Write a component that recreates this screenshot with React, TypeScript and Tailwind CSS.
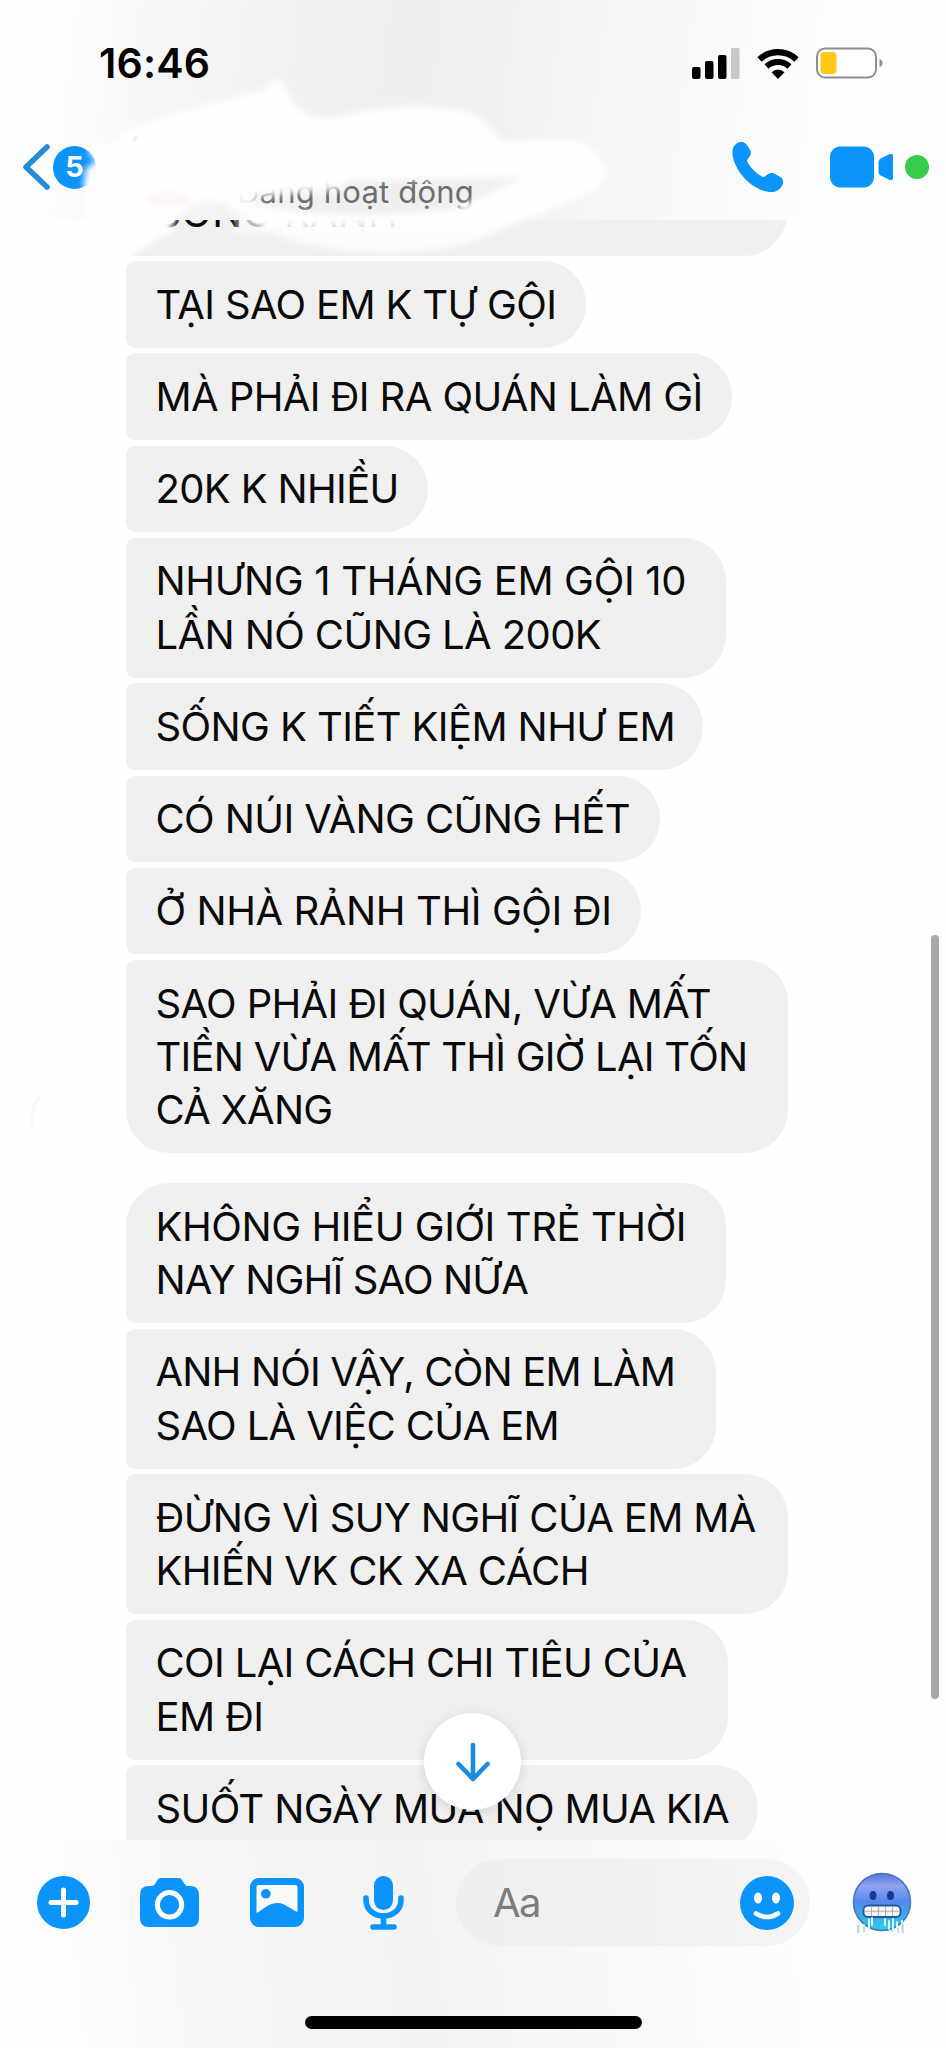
/**
 * Messenger chat screen: status bar, chat header, message list, composer.
 */
interface Message {
  lines: string[]
  width: string
  tracking?: string[]
  corners?: string
}

const MIDDLE = 'rounded-l-[9px] rounded-r-[43px]'

const groups: Message[][] = [
  [
    { lines: ['SỐNG RẢNH'], width: 'w-[661px]', tracking: ['tracking-[0.2px]'] },
    { lines: ['TẠI SAO EM K TỰ GỘI'], width: 'w-[460px]' },
    { lines: ['MÀ PHẢI ĐI RA QUÁN LÀM GÌ'], width: 'w-[606px]', tracking: ['tracking-[-0.6px]'] },
    { lines: ['20K K NHIỀU'], width: 'w-[302px]' },
    {
      lines: ['NHƯNG 1 THÁNG EM GỘI 10', 'LẦN NÓ CŨNG LÀ 200K'],
      width: 'w-[600px]',
      tracking: ['tracking-[-0.32px]', 'tracking-[-0.6px]'],
    },
    { lines: ['SỐNG K TIẾT KIỆM NHƯ EM'], width: 'w-[577px]', tracking: ['tracking-[-0.6px]'] },
    { lines: ['CÓ NÚI VÀNG CŨNG HẾT'], width: 'w-[534px]', tracking: ['tracking-[-0.6px]'] },
    { lines: ['Ở NHÀ RẢNH THÌ GỘI ĐI'], width: 'w-[515px]', tracking: ['tracking-[-0.4px]'] },
    {
      lines: ['SAO PHẢI ĐI QUÁN, VỪA MẤT', 'TIỀN VỪA MẤT THÌ GIỜ LẠI TỐN', 'CẢ XĂNG'],
      width: 'w-[662px]',
      tracking: ['tracking-[-0.65px]', 'tracking-[-0.75px]', 'tracking-[-0.75px]'],
      corners: 'rounded-tl-[9px] rounded-r-[43px] rounded-bl-[43px]',
    },
  ],
  [
    {
      lines: ['KHÔNG HIỂU GIỚI TRẺ THỜI', 'NAY NGHĨ SAO NỮA'],
      width: 'w-[600px]',
      tracking: ['tracking-[-0.42px]', 'tracking-[-0.85px]'],
      corners: 'rounded-tl-[43px] rounded-r-[43px] rounded-bl-[9px]',
    },
    {
      lines: ['ANH NÓI VẬY, CÒN EM LÀM', 'SAO LÀ VIỆC CỦA EM'],
      width: 'w-[590px]',
      tracking: ['tracking-[-0.82px]', 'tracking-[-0.65px]'],
    },
    { lines: ['ĐỪNG VÌ SUY NGHĨ CỦA EM MÀ', 'KHIẾN VK CK XA CÁCH'], width: 'w-[662px]' },
    { lines: ['COI LẠI CÁCH CHI TIÊU CỦA', 'EM ĐI'], width: 'w-[602px]' },
    { lines: ['SUỐT NGÀY MUA NỌ MUA KIA'], width: 'w-[632px]' },
  ],
]

function Bubble({ lines, width, tracking = [], corners = MIDDLE }: Message) {
  return (
    <div
      className={`${width} ${corners} bg-[#f0f0f0] py-[16.6px] pl-[29.5px] text-[40px] leading-[53.4px] whitespace-nowrap text-[#0a0a0a]`}
    >
      {lines.map((line, i) => (
        <p key={line} className={tracking[i] ?? 'tracking-[-0.65px]'}>
          {line}
        </p>
      ))}
    </div>
  )
}

function StatusBar() {
  return (
    <div className="flex h-[50px] items-center justify-between pr-[63px] pl-[99px]">
      <span className="text-[41px] leading-[50px] font-semibold tracking-[0.2px] text-black">16:46</span>
      <div className="flex items-center">
        <svg className="h-[31px] w-[48px]" viewBox="0 0 48 31">
          <rect x="0" y="19" width="8.5" height="12" rx="2" />
          <rect x="13" y="13" width="8.5" height="18" rx="2" />
          <rect x="26" y="7" width="8.5" height="24" rx="2" />
          <rect x="39" y="0" width="8.5" height="31" rx="1" fill="#c8c8c8" />
        </svg>
        <svg className="ml-[17px] h-[31px] w-[42px]" viewBox="0 0 42 31" fill="none" stroke="#000">
          <path d="M2.5 11.5A27 27 0 0 1 39.500 11.500" strokeWidth="6.200" />
          <path d="M9.500 18.500A17 17 0 0 1 32.500 18.500" strokeWidth="5.800" />
          <path d="M14.500 24.300Q21 18.500 27.500 24.300L21 31Z" fill="#000" stroke="none" />
        </svg>
        <svg className="ml-[17px] h-[32px] w-[67px]" viewBox="0 0 67 32">
          <rect x="1" y="1.500" width="59" height="29" rx="8" fill="#fff" stroke="#8e8e8e" strokeWidth="2" />
          <rect x="4.500" y="5" width="16" height="22" rx="4" fill="#fbc916" />
          <path d="M63.500 12Q66.500 13 66.500 16T63.500 20Z" fill="#8e8e8e" />
        </svg>
      </div>
    </div>
  )
}

function Header() {
  return (
    <header className="relative h-[220px] shrink-0 bg-[linear-gradient(97deg,#fefefe_6%,#f8f8f8_15%,#f2f2f2_28%,#efefef_43%,#f1f1f1_52%,#f7f7f7_67%,#fafafa_77%,#fefefe_88%)] pt-[38px]">
      <StatusBar />
      <div className="mt-[49px] flex h-[60px] items-center pr-[17px] pl-[23px]">
        <svg className="h-[46px] w-[27px]" viewBox="0 0 27 46" fill="none" stroke="#258bd6" strokeWidth="5.500" strokeLinecap="round" strokeLinejoin="round">
          <path d="M24 3L3 23L24 43" />
        </svg>
        <span className="ml-[3px] flex size-[43px] items-center justify-center rounded-full bg-[#0a94fc] text-[29px] font-bold text-white">
          5
        </span>
        <span className="mt-[50px] ml-[141px] text-[31px] leading-[40px] tracking-[0.2px] whitespace-nowrap text-[#6e6e6e]">
          Đang hoạt động
        </span>
        <div className="ml-auto flex items-center">
          <svg className="h-[52px] w-[52px]" viewBox="0 0 53 52" fill="#0a94fc">
            <path d="M9 0.500C12 0.300 14 2 16 4.500L18.500 9C20 12 19 14 17 16.500C15 19 15 20 16.500 22.500C20 28 24 32 30 35.500C32 36.500 33 36.500 35 34.500C38 32 40 31.500 43 32.500L49 36C52 38 53 41 51.500 44C49 49 45 51.500 40 51.500C31 51.500 20 46 11 35.500C4 27 0.500 18 0.500 11C0.500 5 4 1 9 0.500Z" />
          </svg>
          <svg className="ml-[46px] h-[42px] w-[64px]" viewBox="0 0 64 42" fill="#0a94fc">
            <rect x="0" y="0.500" width="44" height="41" rx="10" />
            <path d="M48.500 16Q48.500 14 50.500 12.500L60 8Q63 7 63 10V32Q63 35 60 34L50.500 29.500Q48.500 28 48.500 26Z" />
          </svg>
          <span className="ml-[11px] size-[24px] rounded-full bg-[#36cb4a]" />
        </div>
      </div>
    </header>
  )
}

// Кисть, которой закрашены имя и аватар собеседника
function BrushCover() {
  return (
    <svg className="pointer-events-none absolute top-0 left-0 h-[265px] w-[660px]" viewBox="0 0 660 265">
      <defs>
        <filter id="soft" x="-5%" y="-5%" width="110%" height="110%">
          <feGaussianBlur stdDeviation="3" />
        </filter>
      </defs>
      <g filter="url(#soft)" fill="#fefefe">
        <path
          fillRule="evenodd"
          d="M101 156C114 132 145 124 172 114L195 108C225 102 245 92 264 90Q277 66 289 93C293 112 315 120 335 117C390 104 430 104 470 112C488 120 492 134 502 140L575 140C595 145 605 165 606 178C600 188 590 195 570 200C548 212 530 217 512 224L262 224C254 214 240 210 228 205C215 200 200 200 190 206C180 212 176 216 173 226C160 240 145 248 128 256H85V170ZM228 197C280 194 320 184 350 181L525 177C500 188 480 197 460 207C430 214 350 217 310 213C280 209 250 206 228 197Z"
        />
        <path d="M240 215H530C500 232 470 246 440 249C380 256 320 250 285 238C262 230 252 222 240 215Z" opacity="0.860" />
        <ellipse cx="95" cy="150" rx="6" ry="8" />
        <ellipse cx="91" cy="184" rx="8" ry="7" />
        <path d="M150 208H172V236H150Z" opacity="0.700" />
        <path d="M236 214H270V234H236Z" opacity="0.600" />
        <path d="M230 176H345V190L300 193L256 197V212H232Z" opacity="0.850" />
        <ellipse cx="168" cy="199" rx="22" ry="8" fill="#fdf6f6" />
      </g>
      <path d="M133 141L137 137" stroke="#eee" strokeWidth="3" />
    </svg>
  )
}

function FrozenFace() {
  return (
    <svg className="h-[62px] w-[60px]" viewBox="0 0 60 62">
      <defs>
        <linearGradient id="ice" x1="0" y1="0" x2="0" y2="1">
          <stop offset="0" stopColor="#5672d8" />
          <stop offset="0.220" stopColor="#8fa4f4" />
          <stop offset="0.500" stopColor="#5388ee" />
          <stop offset="0.800" stopColor="#37b5e9" />
          <stop offset="1" stopColor="#2fd0e8" />
        </linearGradient>
      </defs>
      <circle cx="30" cy="30" r="28.500" fill="url(#ice)" stroke="#4275bd" strokeWidth="1.500" />
      <ellipse cx="21" cy="23.500" rx="3.500" ry="4.500" fill="#173c8d" />
      <ellipse cx="38.500" cy="23.500" rx="3.500" ry="4.500" fill="#173c8d" />
      <rect x="11.500" y="33.500" width="37" height="11.500" rx="4.500" fill="#f5f5f8" stroke="#24579c" strokeWidth="1.800" />
      <path d="M13 39.200H47M19.500 35V44M26.500 35V44M33.500 35V44M40.500 35V44" stroke="#a9a3ab" strokeWidth="0.900" />
      <path d="M7 50V60M12 53V58M17 47V57M20 46V53M33 47V53M37 49V57M41 47V58M45 50V57M50 49V60" fill="none" stroke="#d6f5fb" strokeWidth="2" strokeLinecap="round" />
      <path d="M6 53V61M12 55V60M40 57V60M46 56V61M51 53V61" stroke="#9cb7bd" strokeWidth="1" />
    </svg>
  )
}

function Composer() {
  return (
    <footer className="relative h-[208px] shrink-0 bg-[linear-gradient(83deg,#fefefe_6%,#f9f9f9_17%,#f4f4f4_32%,#f3f3f3_45%,#f8f8f8_62%,#fbfbfb_76%,#fefefe_88%)]">
      <div className="mt-[19px] flex h-[87px] items-center pl-[37px] text-[#0a94fc]">
        <svg className="size-[53px]" viewBox="0 0 53 53">
          <circle cx="26.500" cy="26.500" r="26.500" fill="currentColor" />
          <path d="M26.500 14V39M14 26.500H39" stroke="#fff" strokeWidth="5" strokeLinecap="round" />
        </svg>
        <svg className="ml-[50px] h-[49px] w-[59px]" viewBox="0 0 59 49">
          <path d="M21 0H39Q41 0 42 2L44.500 6Q45.500 8 48 8H50Q59 8 59 17V40Q59 49 50 49H9Q0 49 0 40V17Q0 8 9 8H11Q14 8 15 6L17.500 2Q18.500 0 21 0Z" fill="currentColor" />
          <circle cx="29.500" cy="26.800" r="12.200" fill="none" stroke="#fff" strokeWidth="5" />
        </svg>
        <svg className="ml-[51px] h-[49px] w-[54px]" viewBox="0 0 54 49">
          <rect width="54" height="49" rx="9" fill="currentColor" />
          <path d="M6.500 9Q6.500 7 8.500 7H45.500Q47.500 7 47.500 9V34C40 31 35 25 27.500 25C19 25 14 31 6.500 35Z" fill="#fafafa" />
          <circle cx="15.800" cy="15.800" r="4.800" fill="currentColor" />
        </svg>
        <svg className="ml-[59px] h-[54px] w-[41px]" viewBox="0 0 41 54">
          <rect x="11" width="19" height="34" rx="9.500" fill="currentColor" />
          <path d="M3 22V23.500C3 34 11 40 20.500 40S38 34 38 23.500V22M20.500 40V50M10 51H31" fill="none" stroke="currentColor" strokeWidth="5.600" strokeLinecap="round" />
        </svg>
        <div className="ml-[52px] flex h-[87px] w-[354px] items-center justify-between rounded-full bg-[linear-gradient(90deg,#efefef,#f1f1f1_50%,#f5f5f5)] pr-[16px] pl-[37px]">
          <span className="text-[40px] tracking-[-1.5px] text-[#7c7c7c]">Aa</span>
          <svg className="size-[54px]" viewBox="0 0 54 54">
            <circle cx="27" cy="27" r="27" fill="currentColor" />
            <ellipse cx="18" cy="22" rx="4" ry="5.500" fill="#fff" />
            <ellipse cx="36" cy="22" rx="4" ry="5.500" fill="#fff" />
            <path d="M16 37.500Q27 44.500 38 37.500" fill="none" stroke="#fff" strokeWidth="4.600" strokeLinecap="round" />
          </svg>
        </div>
        <div className="ml-[42px]">
          <FrozenFace />
        </div>
      </div>
      <div className="mt-[70px] ml-[305px] h-[13px] w-[337px] rounded-full bg-black" />
    </footer>
  )
}

export default function App() {
  return (
    <div className="relative flex h-[2048px] w-[946px] flex-col overflow-hidden bg-[#fefefe] font-['Inter',sans-serif]">
      <Header />
      <main className="relative flex-1 overflow-hidden">
        <div className="-mt-[51px] flex flex-col gap-[29.8px] pl-[126px]">
          {groups.map((group, i) => (
            <div key={i} className="flex flex-col gap-[5.6px]">
              {group.map((message) => (
                <Bubble key={message.lines[0]} {...message} />
              ))}
            </div>
          ))}
        </div>

        {/* Полоса прокрутки */}
        <div className="absolute top-[715px] right-[7px] h-[764px] w-[8px] rounded-full bg-[#a9a9a9]" />
        <svg className="absolute top-[876px] left-[28px] h-[34px] w-[14px]" viewBox="0 0 14 34">
          <path d="M11 1Q2 14 4 32" fill="none" stroke="#f8f8f8" strokeWidth="4" />
        </svg>

        {/* Кнопка «вниз» */}
        <button className="absolute top-[1493px] left-[424px] flex size-[97px] items-center justify-center rounded-full bg-white shadow-[0_2px_12px_rgba(0,0,0,0.12)]">
          <svg className="h-[40px] w-[36px]" viewBox="0 0 36 40" fill="none" stroke="#1a8be0" strokeWidth="4.600" strokeLinecap="round" strokeLinejoin="round">
            <path d="M18 3V37M3.500 22L18 37L32.500 22" />
          </svg>
        </button>
      </main>
      <Composer />
      <BrushCover />
    </div>
  )
}
